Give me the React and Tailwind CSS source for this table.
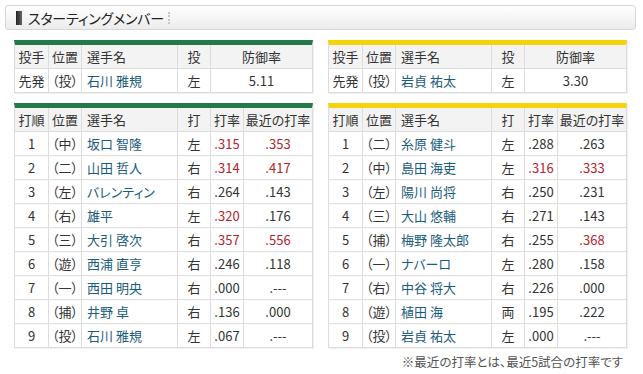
import React from 'react';

const NAME = 'text-[#1b5c7b]';
const RED = 'text-[#b3232c]';

const pitchers = {
  left: { pos: '（投）', name: '石川 雅規', hand: '左', era: '5.11' },
  right: { pos: '（投）', name: '岩貞 祐太', hand: '左', era: '3.30' },
};

// [order, pos, name, hand, avg, recent, avgRed, recentRed]
const leftLineup = [
  ['1', '（中）', '坂口 智隆', '左', '.315', '.353', true, true],
  ['2', '（二）', '山田 哲人', '右', '.314', '.417', true, true],
  ['3', '（左）', 'バレンティン', '右', '.264', '.143'],
  ['4', '（右）', '雄平', '左', '.320', '.176', true],
  ['5', '（三）', '大引 啓次', '右', '.357', '.556', true, true],
  ['6', '（遊）', '西浦 直亨', '右', '.246', '.118'],
  ['7', '（一）', '西田 明央', '右', '.000', '.---'],
  ['8', '（捕）', '井野 卓', '右', '.136', '.000'],
  ['9', '（投）', '石川 雅規', '左', '.067', '.---'],
];

const rightLineup = [
  ['1', '（二）', '糸原 健斗', '左', '.288', '.263'],
  ['2', '（中）', '島田 海吏', '左', '.316', '.333', true, true],
  ['3', '（左）', '陽川 尚将', '右', '.250', '.231'],
  ['4', '（三）', '大山 悠輔', '右', '.271', '.143'],
  ['5', '（捕）', '梅野 隆太郎', '右', '.255', '.368', false, true],
  ['6', '（一）', 'ナバーロ', '左', '.280', '.158'],
  ['7', '（右）', '中谷 将大', '右', '.226', '.000'],
  ['8', '（遊）', '植田 海', '両', '.195', '.222'],
  ['9', '（投）', '岩貞 祐太', '左', '.000', '.---'],
];

const th = 'h-[24px] p-0 font-normal bg-[#f3f3f3] border-b border-[#dcdcdc]';
const td = 'h-[24px] p-0 bg-white border-b border-[#dcdcdc]';
const sep = 'border-l';

function Cols({ pitcher }) {
  return pitcher ? (
    <colgroup>
      <col className="w-[33px]" />
      <col className="w-[33px]" />
      <col className="w-[96px]" />
      <col className="w-[33px]" />
      <col />
    </colgroup>
  ) : (
    <colgroup>
      <col className="w-[33px]" />
      <col className="w-[33px]" />
      <col className="w-[96px]" />
      <col className="w-[33px]" />
      <col className="w-[33px]" />
      <col />
    </colgroup>
  );
}

function PitcherTable({ bar, p }) {
  return (
    <div className={`border-t-[5px] ${bar} border-x border-x-[#dcdcdc] shadow-[1px_1px_1px_rgba(0,0,0,0.06)]`}>
      <table className="w-full table-fixed border-separate border-spacing-0">
        <Cols pitcher />
        <thead>
          <tr>
            <th className={`${th} text-center`}>投手</th>
            <th className={`${th} ${sep} text-center`}>位置</th>
            <th className={`${th} ${sep} text-left pl-[5px]`}>選手名</th>
            <th className={`${th} ${sep} text-center`}>投</th>
            <th className={`${th} ${sep} text-center`}>防御率</th>
          </tr>
        </thead>
        <tbody>
          <tr>
            <td className={`${td} text-center`}>先発</td>
            <td className={`${td} ${sep} text-center`}>{p.pos}</td>
            <td className={`${td} ${sep} pl-[5px] ${NAME}`}>{p.name}</td>
            <td className={`${td} ${sep} text-center`}>{p.hand}</td>
            <td className={`${td} ${sep} text-center`}>{p.era}</td>
          </tr>
        </tbody>
      </table>
    </div>
  );
}

function LineupTable({ bar, rows }) {
  return (
    <div className={`border-t-[5px] ${bar} border-x border-x-[#dcdcdc] shadow-[1px_1px_1px_rgba(0,0,0,0.06)]`}>
      <table className="w-full table-fixed border-separate border-spacing-0">
        <Cols />
        <thead>
          <tr>
            <th className={`${th} text-center`}>打順</th>
            <th className={`${th} ${sep} text-center`}>位置</th>
            <th className={`${th} ${sep} text-left pl-[5px]`}>選手名</th>
            <th className={`${th} ${sep} text-center`}>打</th>
            <th className={`${th} ${sep} text-center`}>打率</th>
            <th className={`${th} ${sep} text-center whitespace-nowrap`}>最近の打率</th>
          </tr>
        </thead>
        <tbody>
          {rows.map(([n, pos, name, hand, avg, recent, avgRed, recentRed]) => (
            <tr key={n}>
              <td className={`${td} text-center`}>{n}</td>
              <td className={`${td} ${sep} text-center`}>{pos}</td>
              <td className={`${td} ${sep} pl-[5px] ${NAME} whitespace-nowrap`}>{name}</td>
              <td className={`${td} ${sep} text-center`}>{hand}</td>
              <td className={`${td} ${sep} text-center ${avgRed ? RED : ''}`}>{avg}</td>
              <td className={`${td} ${sep} text-center ${recentRed ? RED : ''}`}>{recent}</td>
            </tr>
          ))}
        </tbody>
      </table>
    </div>
  );
}

export default function App() {
  return (
    <div
      className="w-[643px] h-[374px] bg-white text-[#333] text-[13px] leading-none overflow-hidden [font-feature-settings:'palt'] [&_td]:border-[#dcdcdc] [&_th]:border-[#dcdcdc]"
      style={{ fontFamily: '"Noto Sans CJK JP", "Liberation Sans", sans-serif' }}
    >
      <div className="pt-[5px] pl-[5px] pr-[7px]">
        <div className="h-[25px] flex items-center rounded-[3px] border border-[#d6d6d6] bg-gradient-to-b from-white to-[#ececec] pl-[10px]">
          <span className="w-[6px] h-[14px] bg-gradient-to-r from-[#222] to-[#666]" />
          <span className="ml-[6px] text-[14px] text-[#222] tracking-[-0.2px]">スターティングメンバー</span>
          <span className="ml-[4px] h-[12px] border-l-2 border-dotted border-[#c8c8c8]" />
        </div>
      </div>

      <div className="px-[14px] pt-[10px] grid grid-cols-[299px_299px] gap-x-[15px] gap-y-[10px]">
        <PitcherTable bar="border-t-[#25784a]" p={pitchers.left} />
        <PitcherTable bar="border-t-[#f4d20c]" p={pitchers.right} />
        <LineupTable bar="border-t-[#25784a]" rows={leftLineup} />
        <LineupTable bar="border-t-[#f4d20c]" rows={rightLineup} />
      </div>

      <div className="pr-[20px] pt-[8px] text-right text-[12.5px] text-[#555]">
        ※最近の打率とは、最近5試合の打率です
      </div>
    </div>
  );
}
